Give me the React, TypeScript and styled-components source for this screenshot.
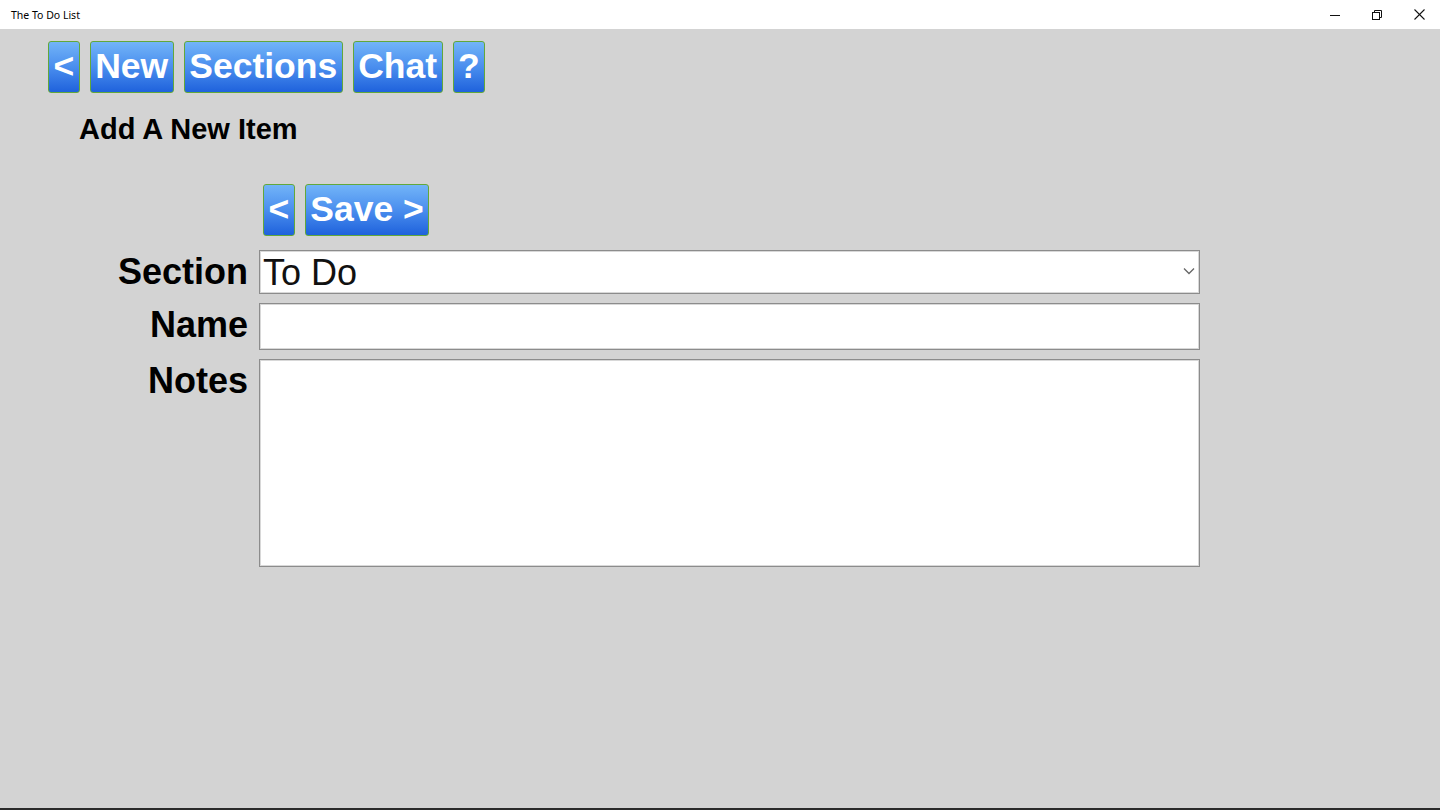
import React from 'react';
import styled, { createGlobalStyle } from 'styled-components';

const GlobalStyle = createGlobalStyle`
    html, body {
        margin: 0;
        padding: 0;
        background: #d3d3d3;
    }
    * {
        box-sizing: border-box;
    }
`;

const Window = styled.div`
    width: 1440px;
    height: 810px;
    display: flex;
    flex-direction: column;
    background: #d3d3d3;
    font-family: "Liberation Sans", Arial, sans-serif;
    overflow: hidden;
`;

const TitleBar = styled.div`
    height: 29px;
    flex: none;
    background: #ffffff;
    display: flex;
    align-items: center;
    padding-left: 11px;
`;

const TitleText = styled.span`
    font-family: "Noto Sans", "Liberation Sans", sans-serif;
    font-size: 10.5px;
    color: #000;
    flex: 1;
`;

const WindowControls = styled.div`
    display: flex;
    height: 100%;
`;

const ControlButton = styled.div`
    width: 42px;
    height: 100%;
    display: flex;
    align-items: center;
    justify-content: center;
    color: #111;
`;

const Content = styled.main`
    flex: 1;
    padding: 12px 0 0 48px;
    display: flex;
    flex-direction: column;
`;

const Toolbar = styled.nav`
    display: flex;
    gap: 10px;
`;

const BlueButton = styled.button`
    height: 52px;
    padding: 0 4.5px;
    border: 1px solid #62a83a;
    border-radius: 3px;
    background: linear-gradient(to bottom, #72b4f8 0%, #4a8eee 50%, #1f62dc 100%);
    color: #ffffff;
    font-family: "Liberation Sans", Arial, sans-serif;
    font-weight: bold;
    font-size: 35.5px;
    line-height: 1;
    cursor: pointer;
`;

const Heading = styled.h1`
    margin: 19px 0 0 31px;
    font-size: 29px;
    line-height: 34px;
    font-weight: bold;
    color: #000;
`;

const Form = styled.form`
    margin-top: 38px;
    display: grid;
    grid-template-columns: 200px 941px;
    column-gap: 11px;
    row-gap: 9px;
    align-items: start;
`;

const SaveRow = styled.div`
    grid-column: 2;
    display: flex;
    gap: 10px;
    margin-left: 4px;
    margin-bottom: 5px;
`;

const Label = styled.label`
    text-align: right;
    font-size: 36px;
    font-weight: bold;
    color: #000;
    line-height: 40px;
    padding-top: 2px;
`;

const FieldBox = styled.div<{ $height: number }>`
    height: ${p => p.$height}px;
    background: #ffffff;
    border: 1px solid #8c8c8c;
    box-shadow: inset 0 0 0 1px #d8d8d8;
    position: relative;
`;

const SelectText = styled.span`
    position: absolute;
    left: 3px;
    top: 2px;
    font-size: 36px;
    line-height: 40px;
    color: #111;
`;

const Chevron = styled.svg`
    position: absolute;
    right: 4px;
    top: 16px;
`;

const BottomBar = styled.div`
    height: 2px;
    flex: none;
    background: #2a2a2a;
`;

const App = () => {
    const topButtons = ['<', 'New', 'Sections', 'Chat', '?'];

    return (
        <>
            <GlobalStyle />
            <Window>
                <TitleBar>
                    <TitleText>The To Do List</TitleText>
                    <WindowControls>
                        <ControlButton>
                            <svg width="10" height="10" viewBox="0 0 10 10">
                                <line x1="0" y1="5.5" x2="10" y2="5.5" stroke="#111" strokeWidth="1" />
                            </svg>
                        </ControlButton>
                        <ControlButton>
                            <svg width="10" height="10" viewBox="0 0 10 10" fill="none" stroke="#111" strokeWidth="1">
                                <rect x="0.5" y="2.5" width="7" height="7" />
                                <path d="M2.5 2.5V0.5H9.5V7.5H7.5" />
                            </svg>
                        </ControlButton>
                        <ControlButton>
                            <svg width="11" height="11" viewBox="0 0 11 11" stroke="#111" strokeWidth="1.1">
                                <line x1="0.5" y1="0.5" x2="10.5" y2="10.5" />
                                <line x1="10.5" y1="0.5" x2="0.5" y2="10.5" />
                            </svg>
                        </ControlButton>
                    </WindowControls>
                </TitleBar>
                <Content>
                    <Toolbar>
                        {topButtons.map(label => (
                            <BlueButton key={label} type="button">{label}</BlueButton>
                        ))}
                    </Toolbar>
                    <Heading>Add A New Item</Heading>
                    <Form onSubmit={e => e.preventDefault()}>
                        <SaveRow>
                            <BlueButton type="button">&lt;</BlueButton>
                            <BlueButton type="submit">Save &gt;</BlueButton>
                        </SaveRow>
                        <Label>Section</Label>
                        <FieldBox $height={44}>
                            <SelectText>To Do</SelectText>
                            <Chevron width="12" height="8" viewBox="0 0 12 8" fill="none" stroke="#666" strokeWidth="1.3">
                                <path d="M1 1.5L6 6.5L11 1.5" />
                            </Chevron>
                        </FieldBox>
                        <Label>Name</Label>
                        <FieldBox $height={47} />
                        <Label>Notes</Label>
                        <FieldBox $height={208} />
                    </Form>
                </Content>
                <BottomBar />
            </Window>
        </>
    );
};

export default App;
